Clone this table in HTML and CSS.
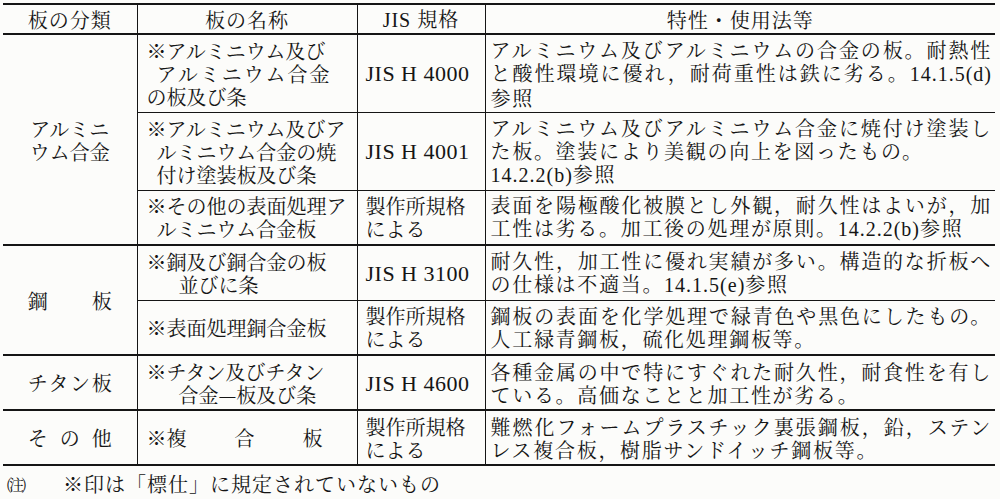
FILE: index.html
```html
<!DOCTYPE html>
<html>
<head>
<meta charset="utf-8">
<title>板の分類</title>
<link rel="stylesheet" href="styles.css">
</head>
<body>
<table class="spec">
  <colgroup>
    <col class="c-cat">
    <col class="c-name">
    <col class="c-std">
    <col class="c-note">
  </colgroup>
  <thead>
    <tr class="h">
      <th class="cat"><span class="spread w84">板の分類</span></th>
      <th>板の名称</th>
      <th><span class="lat">JIS</span> 規格</th>
      <th>特性・使用法等</th>
    </tr>
  </thead>
  <tbody>
    <tr class="r3">
      <td class="cat end" rowspan="3"><div>アルミニ</div><div>ウム合金</div></td>
      <td class="name"><div>※アルミニウム及び</div><div class="i1 wide">アルミニウム合金</div><div>の板及び条</div></td>
      <td class="std"><span class="lat code">JIS H 4000</span></td>
      <td class="desc"><div class="j">アルミニウム及びアルミニウムの合金の板。耐熱性</div><div class="j">と酸性環境に優れ，耐荷重性は鉄に劣る。<span class="lat">14.1.5(d)</span></div><div>参照</div></td>
    </tr>
    <tr class="r3">
      <td class="name"><div>※アルミニウム及びア</div><div class="i1">ルミニウム合金の焼</div><div class="i1">付け塗装板及び条</div></td>
      <td class="std"><span class="lat code">JIS H 4001</span></td>
      <td class="desc"><div class="j">アルミニウム及びアルミニウム合金に焼付け塗装し</div><div>た板。塗装により美観の向上を図ったもの。</div><div><span class="lat">14.2.2(b)</span>参照</div></td>
    </tr>
    <tr class="r2 end">
      <td class="name"><div>※その他の表面処理ア</div><div class="i1">ルミニウム合金板</div></td>
      <td class="std"><div>製作所規格</div><div>による</div></td>
      <td class="desc"><div class="j">表面を陽極酸化被膜とし外観，耐久性はよいが，加</div><div>工性は劣る。加工後の処理が原則。<span class="lat">14.2.2(b)</span>参照</div></td>
    </tr>
    <tr class="r2">
      <td class="cat end" rowspan="2"><span class="spread w84">鋼　板</span></td>
      <td class="name"><div>※銅及び銅合金の板</div><div class="i2">並びに条</div></td>
      <td class="std"><span class="lat code">JIS H 3100</span></td>
      <td class="desc"><div class="j">耐久性，加工性に優れ実績が多い。構造的な折板へ</div><div>の仕様は不適当。<span class="lat">14.1.5(e)</span>参照</div></td>
    </tr>
    <tr class="r2 end">
      <td class="name"><div>※表面処理銅合金板</div></td>
      <td class="std"><div>製作所規格</div><div>による</div></td>
      <td class="desc"><div class="j">鋼板の表面を化学処理で緑青色や黒色にしたもの。</div><div>人工緑青鋼板，硫化処理鋼板等。</div></td>
    </tr>
    <tr class="r2 end">
      <td class="cat end"><span class="spread w84">チタン板</span></td>
      <td class="name"><div>※チタン及びチタン</div><div class="i2">合金—板及び条</div></td>
      <td class="std"><span class="lat code">JIS H 4600</span></td>
      <td class="desc"><div class="j">各種金属の中で特にすぐれた耐久性，耐食性を有し</div><div>ている。高価なことと加工性が劣る。</div></td>
    </tr>
    <tr class="r2 end">
      <td class="cat end"><span class="spread w84">その他</span></td>
      <td class="name"><div class="triple"><span>※複</span><span>合</span><span>板</span></div></td>
      <td class="std"><div>製作所規格</div><div>による</div></td>
      <td class="desc"><div class="j">難燃化フォームプラスチック裏張鋼板，鉛，ステン</div><div>レス複合板，樹脂サンドイッチ鋼板等。</div></td>
    </tr>
  </tbody>
</table>
<p class="footnote"><span class="mark">(注)</span><span class="ftext">※印は「標仕」に規定されていないもの</span></p>
</body>
</html>
```

FILE: styles.css
```css
html, body {
  margin: 0;
  padding: 0;
  background: #fcfcfa;
}

body {
  color: #151515;
  font-family: "Noto Serif CJK JP", "Noto Sans CJK JP", serif;
  font-size: 20px;
  line-height: 23px;
  padding: 3px 5px 0 3px;
}

.lat {
  font-family: "Liberation Serif", "Times New Roman", serif;
  letter-spacing: 1px;
}

.code {
  font-size: 22px;
  letter-spacing: 0.5px;
}

.spec {
  width: 992px;
  border-collapse: collapse;
  table-layout: fixed;
  border-top: 2px solid #151515;
}

.c-cat { width: 134px; }
.c-name { width: 220px; }
.c-std { width: 128px; }
.c-note { width: 510px; }

.spec th,
.spec td {
  padding: 0;
  vertical-align: middle;
  border-left: 1px solid #151515;
  border-bottom: 1px solid #151515;
  font-weight: normal;
  white-space: nowrap;
}

.spec th:first-child,
.spec td.cat {
  border-left: none;
}

.spec thead th {
  border-bottom: 2px solid #151515;
  text-align: center;
  letter-spacing: 1px;
}

.h { height: 30px; }
.r3 { height: 78px; }
.r2 { height: 55px; }

.spec tr.end td,
.spec td.end {
  border-bottom: 2px solid #151515;
}

.cat {
  text-align: center;
}

.spread {
  display: inline-block;
  text-align: justify;
  text-align-last: justify;
}

.w84 { width: 84px; }

.name {
  padding-left: 9px !important;
}

.name .i1 { padding-left: 10px; }
.name .i2 { padding-left: 32px; }
.name .wide { letter-spacing: 2px; }

.triple {
  display: flex;
  justify-content: space-between;
  width: 176px;
}

.std {
  padding-left: 8px !important;
}

.desc {
  padding-left: 5px !important;
  padding-right: 3px !important;
  letter-spacing: 1.7px;
}

.desc .j {
  text-align: justify;
  text-align-last: justify;
}

.footnote {
  margin: 6px 0 0 3px;
  display: flex;
  align-items: center;
}

.mark {
  font-size: 15px;
  width: 57px;
  letter-spacing: -2.5px;
}

.ftext {
  letter-spacing: 1px;
}
```
